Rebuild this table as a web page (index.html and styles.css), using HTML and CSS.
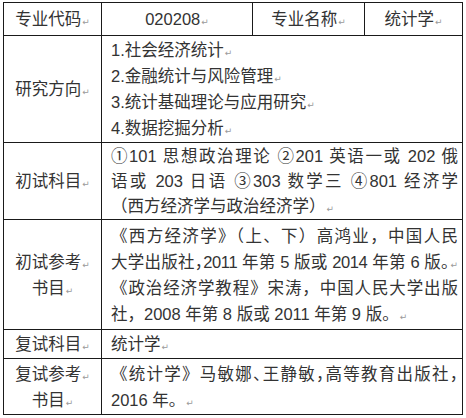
FILE: index.html
```html
<!DOCTYPE html>
<html lang="zh">
<head>
<meta charset="utf-8">
<link rel="stylesheet" href="styles.css">
</head>
<body>
<table class="info">
  <colgroup>
    <col class="c1"><col class="c2"><col class="c3"><col class="c4">
  </colgroup>
  <tr>
    <th><div class="cell h1 mid"><span class="ln">专业代码<span class="pm">↵</span></span></div></th>
    <td><div class="cell h1 mid"><span class="ln">020208<span class="pm">↵</span></span></div></td>
    <td><div class="cell h1 mid"><span class="ln">专业名称<span class="pm">↵</span></span></div></td>
    <td><div class="cell h1 mid"><span class="ln">统计学<span class="pm">↵</span></span></div></td>
  </tr>
  <tr>
    <th><div class="cell h2 mid"><span class="ln">研究方向<span class="pm">↵</span></span></div></th>
    <td colspan="3"><div class="cell h2 txt">
      <div class="ln">1.社会经济统计<span class="pm">↵</span></div>
      <div class="ln">2.金融统计与风险管理<span class="pm">↵</span></div>
      <div class="ln">3.统计基础理论与应用研究<span class="pm">↵</span></div>
      <div class="ln">4.数据挖掘分析<span class="pm">↵</span></div>
    </div></td>
  </tr>
  <tr>
    <th><div class="cell h3 mid"><span class="ln">初试科目<span class="pm">↵</span></span></div></th>
    <td colspan="3"><div class="cell h3 txt">
      <div class="ln jl">①101 思想政治理论 ②201 英语一或 202 俄</div>
      <div class="ln jl">语或 203 日语 ③303 数学三 ④801 经济学</div>
      <div class="ln">（西方经济学与政治经济学）<span class="pm">↵</span></div>
    </div></td>
  </tr>
  <tr>
    <th><div class="cell h4 mid">
      <span class="ln">初试参考<span class="pm">↵</span></span>
      <span class="ln">书目<span class="pm">↵</span></span>
    </div></th>
    <td colspan="3"><div class="cell h4 txt">
      <div class="ln jl">《西方经济学》（上、下）高鸿业，中国人民</div>
      <div class="ln jl tight">大学出版社<span class="hp">，</span>2011 年第 5 版或 2014 年第 6 版<span class="hp">。</span><span class="pm">↵</span></div>
      <div class="ln jl">《政治经济学教程》宋涛，中国人民大学出版</div>
      <div class="ln">社，2008 年第 8 版或 2011 年第 9 版。<span class="pm">↵</span></div>
    </div></td>
  </tr>
  <tr>
    <th><div class="cell h5 mid"><span class="ln">复试科目<span class="pm">↵</span></span></div></th>
    <td colspan="3"><div class="cell h5 txt"><div class="ln">统计学<span class="pm">↵</span></div></div></td>
  </tr>
  <tr>
    <th><div class="cell h6 mid">
      <span class="ln">复试参考<span class="pm">↵</span></span>
      <span class="ln">书目<span class="pm">↵</span></span>
    </div></th>
    <td colspan="3"><div class="cell h6 txt">
      <div class="ln jl">《统计学》马敏娜<span class="hp">、</span>王静敏<span class="hp">，</span>高等教育出版社<span class="hp">，</span></div>
      <div class="ln">2016 年。<span class="pm">↵</span></div>
    </div></td>
  </tr>
</table>
</body>
</html>
```

FILE: styles.css
```css
html, body {
  margin: 0;
  padding: 0;
  background: #ffffff;
}

body {
  width: 466px;
  height: 418px;
  overflow: hidden;
  padding: 2px 0 0 3px;
  box-sizing: border-box;
  font-family: "Liberation Sans", "Noto Sans CJK SC", sans-serif;
  font-size: 16.5px;
  color: #333333;
}

.info {
  border-collapse: collapse;
  table-layout: fixed;
  width: 459px;
}

.c1 { width: 98px; }
.c2 { width: 151px; }
.c3 { width: 112px; }
.c4 { width: 98px; }

.info th,
.info td {
  border: 1px solid #1a1a1a;
  padding: 0;
  font-weight: normal;
  vertical-align: top;
}

.cell {
  display: flex;
  flex-direction: column;
  justify-content: center;
  overflow: hidden;
}

.mid {
  align-items: center;
}

.txt {
  padding: 0 4px 0 9px;
  align-items: stretch;
}

.ln {
  display: block;
  height: 26px;
  line-height: 26px;
  white-space: nowrap;
  flex: none;
}

.h3 .ln,
.h5 .ln {
  height: 25px;
  line-height: 25px;
}

.h1 { height: 32px; }
.h2 { height: 106px; }
.h3 { height: 76px; }
.h4 { height: 109px; }
.h5 { height: 28px; }
.h6 { height: 55px; }

.jl {
  text-align: justify;
  text-align-last: justify;
}

.tight {
  letter-spacing: -0.4px;
}

.hp {
  font-feature-settings: "halt";
}

.pm {
  font-family: "DejaVu Sans", sans-serif;
  font-size: 9px;
  line-height: 1;
  color: #9a9a9a;
  margin-left: 1px;
  letter-spacing: 0;
}
```
